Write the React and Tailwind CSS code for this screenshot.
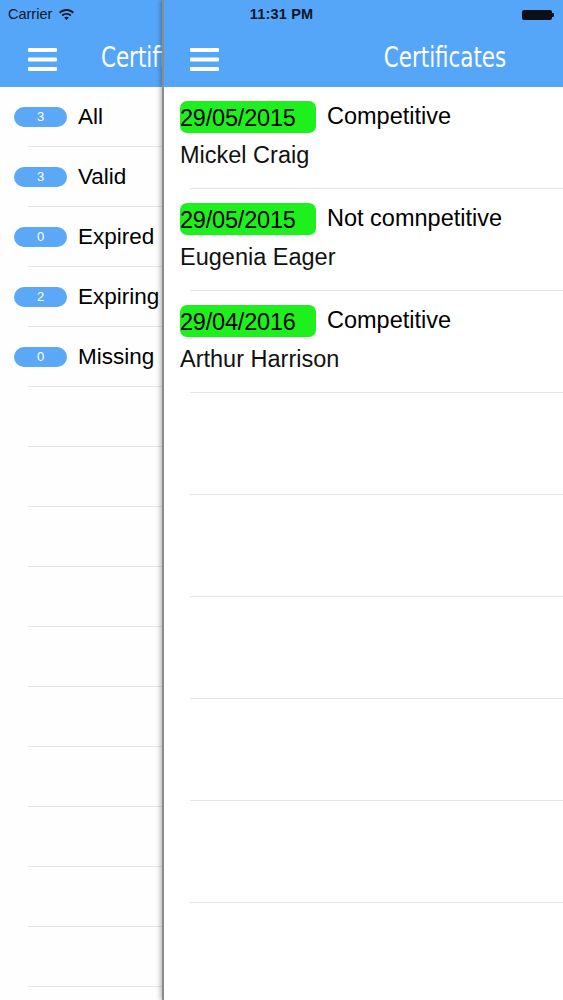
import React from 'react'

const menu = [
    { count: 3, label: 'All' },
    { count: 3, label: 'Valid' },
    { count: 0, label: 'Expired' },
    { count: 2, label: 'Expiring' },
    { count: 0, label: 'Missing' },
]

const certificates = [
    { date: '29/05/2015', kind: 'Competitive', name: 'Mickel Craig' },
    { date: '29/05/2015', kind: 'Not comnpetitive', name: 'Eugenia Eager' },
    { date: '29/04/2016', kind: 'Competitive', name: 'Arthur Harrison' },
]

const titleFont = { fontFamily: '"Liberation Sans Narrow", "DejaVu Sans Condensed", sans-serif' }

const Burger = () => (
    <svg width="29" height="23" viewBox="0 0 29 23" fill="#fff">
        <rect x="0" y="0" width="29" height="4" rx="1" />
        <rect x="0" y="9.5" width="29" height="4" rx="1" />
        <rect x="0" y="19" width="29" height="4" rx="1" />
    </svg>
)

const Wifi = () => (
    <svg width="15" height="12" viewBox="0 0 15 12" fill="#0e1726">
        <path d="M7.5 0C4.6 0 2 1.1 0 3l1.3 1.4C2.9 2.9 5.1 2 7.5 2s4.6.9 6.2 2.4L15 3C13 1.1 10.4 0 7.5 0z" />
        <path d="M7.5 3.9c-1.9 0-3.6.7-4.9 1.9l1.3 1.4c1-.9 2.2-1.4 3.6-1.4s2.6.5 3.6 1.4l1.3-1.4C11.1 4.6 9.4 3.9 7.5 3.9z" />
        <path d="M7.5 7.7c-.9 0-1.7.3-2.3.9L7.5 11l2.3-2.4c-.6-.6-1.4-.9-2.3-.9z" />
    </svg>
)

const App = () => {
    return (
        <div className="relative w-[563px] h-[1000px] overflow-hidden bg-white" style={{ fontFamily: '"Liberation Sans", Arial, sans-serif' }}>
            {/* Status bar */}
            <div className="absolute top-0 left-0 right-0 h-[30px] z-20 flex items-center px-2 text-[#0e1726] text-[14.5px]">
                <div className="flex items-center gap-[7px] flex-1">
                    <span>Carrier</span>
                    <Wifi />
                </div>
                <span className="font-bold text-[14.5px] absolute left-1/2 -translate-x-1/2 tracking-[0.2px]">11:31 PM</span>
                <div className="flex items-center mr-[1px]">
                    <div className="w-[30px] h-[10px] rounded-[2px] bg-[#0b0f18]" />
                    <div className="w-[2px] h-[4px] bg-[#0b0f18] rounded-r-[1px]" />
                </div>
            </div>

            <div className="flex h-full">
                {/* Side menu */}
                <div className="w-[162px] shrink-0 bg-[#fefefe] overflow-hidden">
                    <div className="h-[87px] bg-[#55a6f8] pt-[32px] flex items-center">
                        <div className="pl-[28px]"><Burger /></div>
                        <span className="ml-[44px] text-white text-[29px] whitespace-nowrap origin-left scale-x-[0.82] -mt-[4px]" style={titleFont}>Certificates</span>
                    </div>
                    {menu.map((item) => (
                        <div key={item.label} className="ml-[28px] h-[60px] border-b border-[#e6e6e6]">
                            <div className="-ml-[14px] h-full flex items-center">
                                <span className="w-[53px] h-[20px] rounded-full bg-[#5ba8f6] text-white text-[13px] font-light flex items-center justify-center shrink-0">{item.count}</span>
                                <span className="ml-[11px] text-[22.5px] text-black whitespace-nowrap">{item.label}</span>
                            </div>
                        </div>
                    ))}
                    {Array.from({ length: 10 }).map((_, i) => (
                        <div key={i} className="h-[60px] ml-[28px] border-b border-[#e6e6e6]" />
                    ))}
                </div>

                {/* Main panel */}
                <div className="relative z-10 w-[563px] shrink-0 bg-white border-l-2 border-[#8c8c8c] shadow-[-2px_0_4px_rgba(0,0,0,0.25)]">
                    <div className="h-[87px] bg-[#55a6f8] pt-[32px] flex items-center relative">
                        <div className="pl-[26px]"><Burger /></div>
                        <span className="absolute left-[281px] -translate-x-1/2 top-[29px] h-[58px] flex items-center">
                            <span className="block text-white text-[29px] whitespace-nowrap scale-x-[0.82]" style={titleFont}>Certificates</span>
                        </span>
                    </div>
                    {certificates.map((c, i) => (
                        <div key={i} className="ml-[26px] h-[102px] border-b border-[#e4e4e4]">
                            <div className="-ml-[10px] flex flex-col pt-[14px]">
                                <div className="flex items-center">
                                    <span className="w-[136px] h-[32px] rounded-[7px] bg-[#1ef01e] text-black text-[23.5px] flex items-center leading-none pt-[3px] tracking-[-0.2px]">{c.date}</span>
                                    <span className="ml-[11px] text-[23.5px] text-black leading-none">{c.kind}</span>
                                </div>
                                <span className="mt-[11px] text-[23.5px] text-[#111] leading-none">{c.name}</span>
                            </div>
                        </div>
                    ))}
                    {Array.from({ length: 6 }).map((_, i) => (
                        <div key={i} className="h-[102px] ml-[26px] border-b border-[#e4e4e4]" />
                    ))}
                </div>
            </div>
        </div>
    )
}

export default App
